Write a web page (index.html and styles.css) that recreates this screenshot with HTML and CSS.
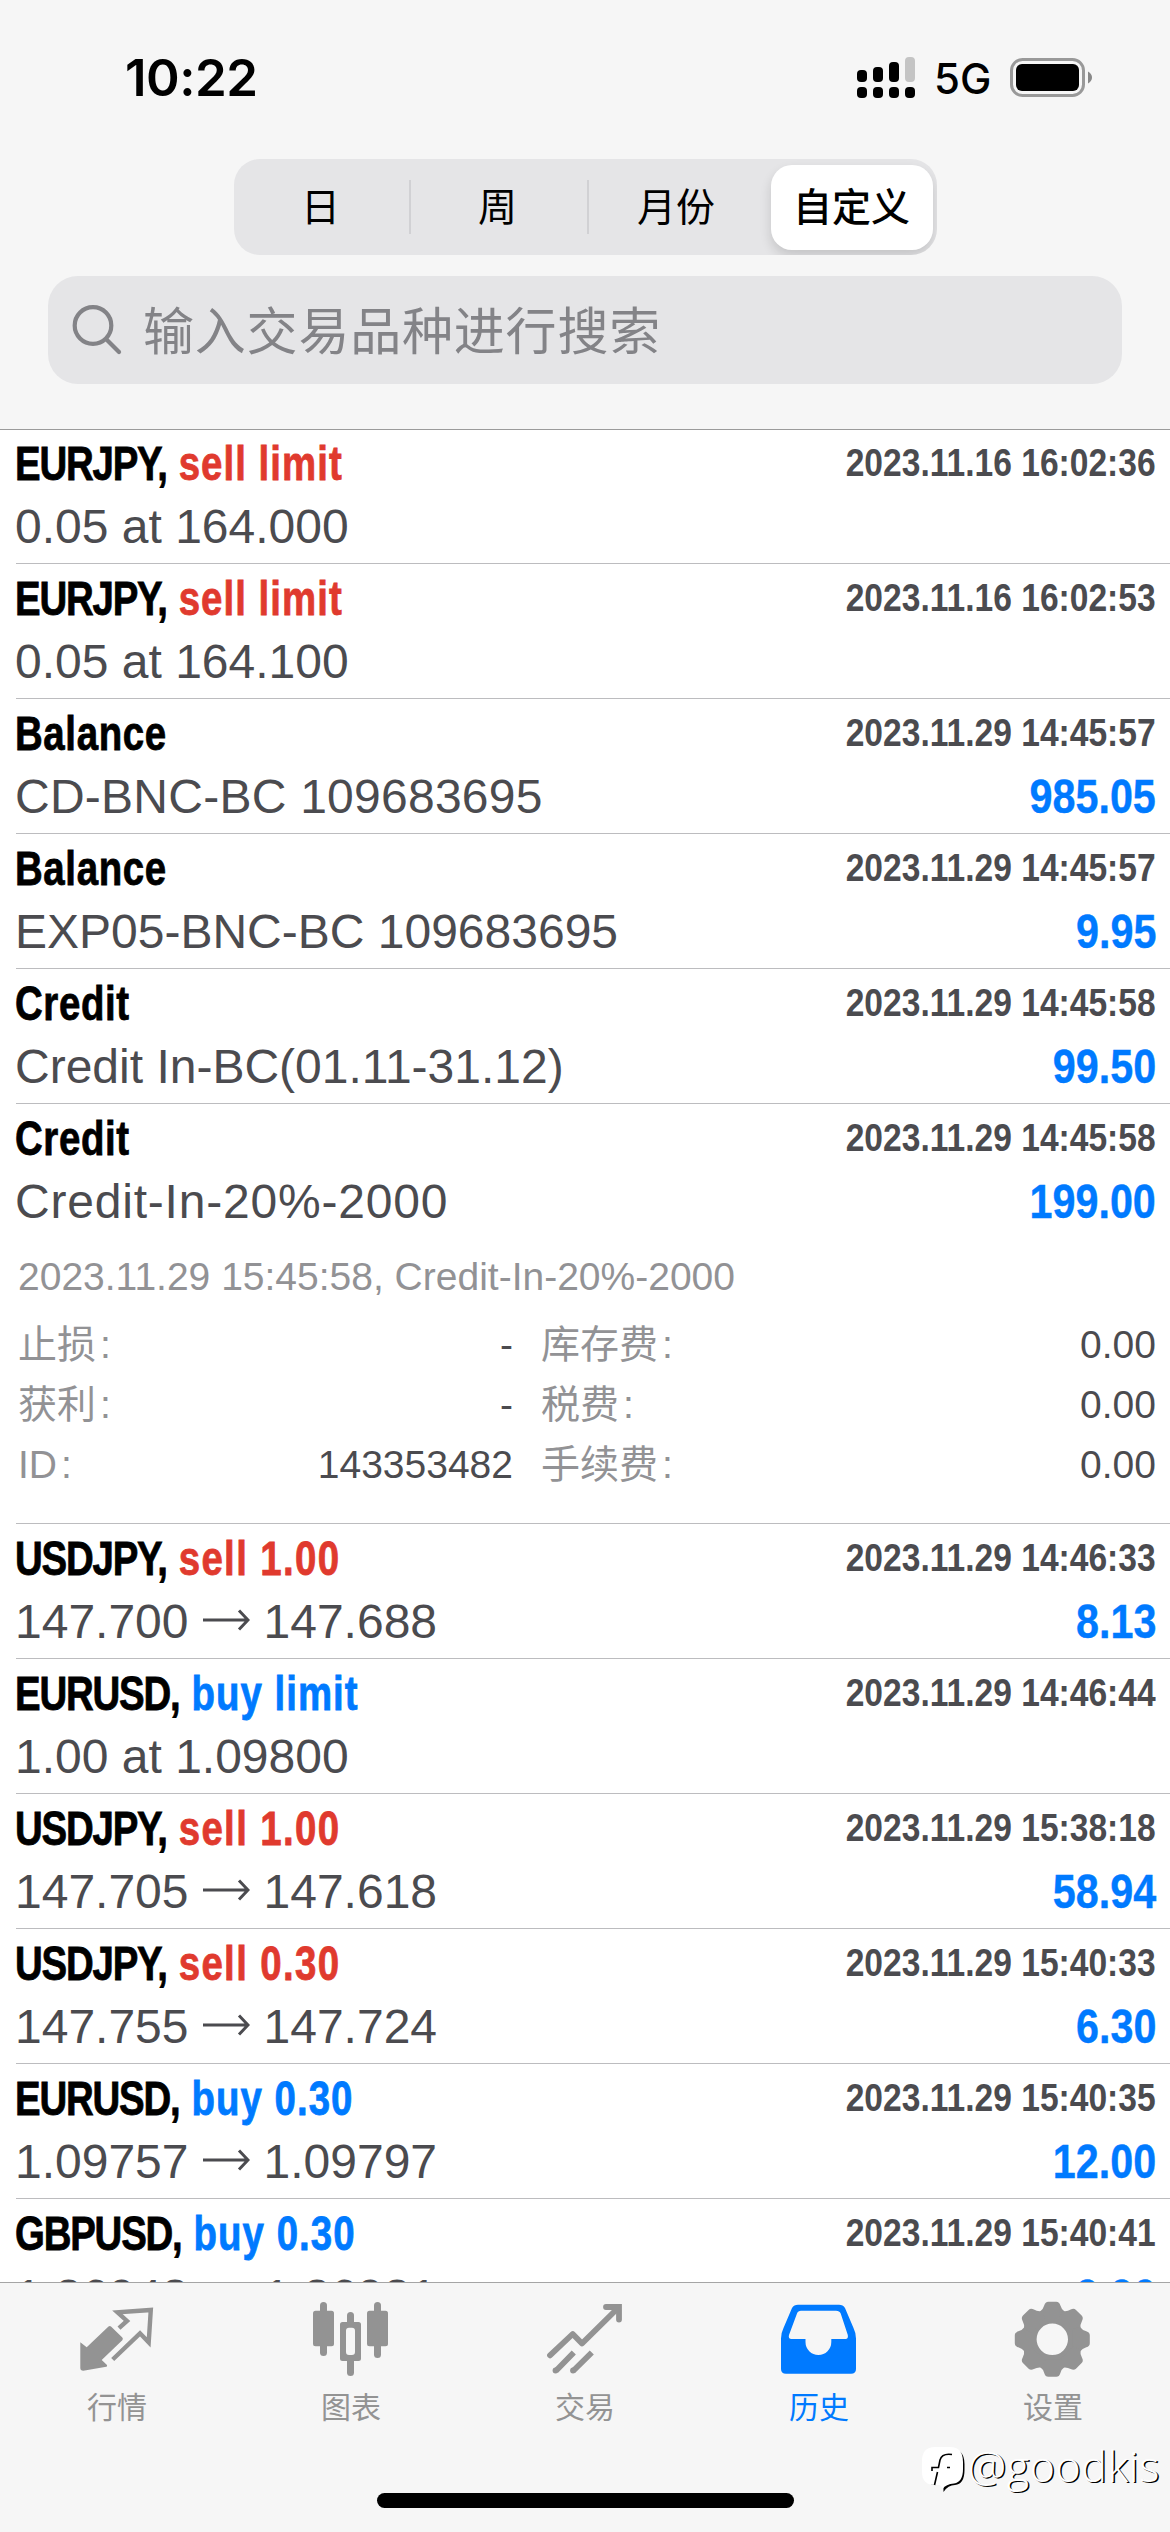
FILE: index.html
```html
<!DOCTYPE html>
<html lang="zh-CN">
<head>
<meta charset="utf-8">
<title>历史</title>
<link rel="stylesheet" href="styles.css">
</head>
<body>
<div class="app">
  <header class="header">
    <div class="status">
      <span class="time">10:22</span>
      <div class="status-right">
        <svg class="signal" viewBox="0 0 58 42" width="58" height="42">
          <rect x="0" y="13" width="10" height="12" rx="4"/><rect x="16" y="10" width="10" height="15" rx="4"/><rect x="32" y="5" width="10" height="20" rx="4"/><rect x="48" y="0" width="10" height="25" rx="4" fill="#c4c4c4"/>
          <rect x="0" y="30" width="10" height="11" rx="4"/><rect x="16" y="30" width="10" height="11" rx="4"/><rect x="32" y="30" width="10" height="11" rx="4"/><rect x="48" y="30" width="10" height="11" rx="4"/>
        </svg>
        <span class="network">5G</span>
        <svg class="battery" viewBox="0 0 83 40" width="83" height="40">
          <rect x="1.5" y="1.5" width="72" height="36" rx="11" fill="none" stroke="#999" stroke-width="3"/>
          <rect x="6" y="6" width="63" height="27" rx="6"/>
          <path d="M78 13.5Q82 16 82 19.5T78 25.500Z" fill="#888"/>
        </svg>
      </div>
    </div>
    <nav class="segments">
      <span class="seg"><span>日</span></span><span class="seg"><span>周</span></span><span class="seg"><span>月份</span></span><span class="seg selected">自定义</span>
    </nav>
    <div class="search">
      <svg viewBox="0 0 50 50" width="50" height="50" fill="none" stroke="#838387" stroke-width="4.200" stroke-linecap="round"><circle cx="21" cy="20.500" r="18.300"/><path d="M34.500 34.500L47 47"/></svg>
      <span>输入交易品种进行搜索</span>
    </div>
  </header>

  <main class="list">
    <section class="row"><div class="line top"><div class="title"><span class="sym">EURJPY,</span><span class="sell lim">sell limit</span></div><span class="date">2023.11.16 16:02:36</span></div><div class="line sub"><span>0.05 at 164.000</span></div></section>
    <section class="row"><div class="line top"><div class="title"><span class="sym">EURJPY,</span><span class="sell lim">sell limit</span></div><span class="date">2023.11.16 16:02:53</span></div><div class="line sub"><span>0.05 at 164.100</span></div></section>
    <section class="row"><div class="line top"><div class="title"><span class="word">Balance</span></div><span class="date">2023.11.29 14:45:57</span></div><div class="line sub"><span class="loose">CD-BNC-BC 109683695</span><b class="profit">985.05</b></div></section>
    <section class="row"><div class="line top"><div class="title"><span class="word">Balance</span></div><span class="date">2023.11.29 14:45:57</span></div><div class="line sub"><span>EXP05-BNC-BC 109683695</span><b class="profit">9.95</b></div></section>
    <section class="row"><div class="line top"><div class="title"><span class="word">Credit</span></div><span class="date">2023.11.29 14:45:58</span></div><div class="line sub"><span>Credit In-BC(01.11-31.12)</span><b class="profit">99.50</b></div></section>
    <section class="row open"><div class="line top"><div class="title"><span class="word">Credit</span></div><span class="date">2023.11.29 14:45:58</span></div><div class="line sub"><span class="looser">Credit-In-20%-2000</span><b class="profit">199.00</b></div>
      <div class="details">
        <p class="comment">2023.11.29 15:45:58, Credit-In-20%-2000</p>
        <dl class="facts">
          <dt>止损<i>:</i></dt><dd>-</dd><dt>库存费<i>:</i></dt><dd>0.00</dd>
          <dt>获利<i>:</i></dt><dd>-</dd><dt>税费<i>:</i></dt><dd>0.00</dd>
          <dt>ID<i>:</i></dt><dd>143353482</dd><dt>手续费<i>:</i></dt><dd>0.00</dd>
        </dl>
      </div>
    </section>
    <section class="row"><div class="line top"><div class="title"><span class="sym">USDJPY,</span><span class="sell">sell 1.00</span></div><span class="date">2023.11.29 14:46:33</span></div><div class="line sub"><span>147.700<svg class="arrow" viewBox="0 0 48 24"><path d="M1 12H46M37 2.500L46 12L37 21.500"/></svg>147.688</span><b class="profit">8.13</b></div></section>
    <section class="row"><div class="line top"><div class="title"><span class="sym">EURUSD,</span><span class="buy lim">buy limit</span></div><span class="date">2023.11.29 14:46:44</span></div><div class="line sub"><span>1.00 at 1.09800</span></div></section>
    <section class="row"><div class="line top"><div class="title"><span class="sym">USDJPY,</span><span class="sell">sell 1.00</span></div><span class="date">2023.11.29 15:38:18</span></div><div class="line sub"><span>147.705<svg class="arrow" viewBox="0 0 48 24"><path d="M1 12H46M37 2.500L46 12L37 21.500"/></svg>147.618</span><b class="profit">58.94</b></div></section>
    <section class="row"><div class="line top"><div class="title"><span class="sym">USDJPY,</span><span class="sell">sell 0.30</span></div><span class="date">2023.11.29 15:40:33</span></div><div class="line sub"><span>147.755<svg class="arrow" viewBox="0 0 48 24"><path d="M1 12H46M37 2.500L46 12L37 21.500"/></svg>147.724</span><b class="profit">6.30</b></div></section>
    <section class="row"><div class="line top"><div class="title"><span class="sym">EURUSD,</span><span class="buy">buy 0.30</span></div><span class="date">2023.11.29 15:40:35</span></div><div class="line sub"><span>1.09757<svg class="arrow" viewBox="0 0 48 24"><path d="M1 12H46M37 2.500L46 12L37 21.500"/></svg>1.09797</span><b class="profit">12.00</b></div></section>
    <section class="row"><div class="line top"><div class="title"><span class="sym">GBPUSD,</span><span class="buy">buy 0.30</span></div><span class="date">2023.11.29 15:40:41</span></div><div class="line sub"><span>1.26948<svg class="arrow" viewBox="0 0 48 24"><path d="M1 12H46M37 2.500L46 12L37 21.500"/></svg>1.26981</span><b class="profit">9.90</b></div></section>
  </main>

  <footer class="tabbar">
    <nav class="tabs">
      <div class="tab">
        <svg viewBox="0 0 90 90" width="90" height="90"><path fill="currentColor" d="M8.300 47.300L14.700 52.300L36.500 31.600Q37.800 30.600 39 31.600L50.300 42.500Q51.500 43.800 50.300 45.200L29.700 65L35 70Q35.500 71.400 34.300 71.800L11.300 75.700Q8.300 75.700 8.300 73Z"/><path fill="none" stroke="currentColor" stroke-width="4.400" d="M40.700 64.500L68 38.300L76.700 47.300L78.800 15L45.500 17.400L55 25.900L47 33.200"/></svg>
        <span>行情</span>
      </div>
      <div class="tab">
        <svg viewBox="0 0 90 90" width="90" height="90" fill="currentColor"><rect x="7" y="15.700" width="21" height="35.500" rx="2.500"/><rect x="14" y="7" width="7" height="54" rx="3.500"/><rect x="61" y="15.700" width="21" height="35.500" rx="2.500"/><rect x="68" y="7" width="7" height="56" rx="3.500"/><rect x="41" y="17" width="7" height="14" rx="3.500"/><rect x="41" y="62" width="7" height="19" rx="3.500"/><path fill-rule="evenodd" d="M36.500 27H52.500Q55 27 55 29.500V63.500Q55 66 52.500 66H36.500Q34 66 34 63.500V29.500Q34 27 36.500 27ZM43 32.700Q40 32.700 40 35.700V57Q40 60 43 60H46Q49 60 49 57V35.700Q49 32.700 46 32.700Z"/></svg>
        <span>图表</span>
      </div>
      <div class="tab">
        <svg viewBox="0 0 90 90" width="90" height="90" fill="none" stroke="currentColor" stroke-width="5.800"><path stroke-linecap="round" stroke-linejoin="round" d="M10 60.300L32.700 39L42 48.500L78 13"/><path stroke-linecap="round" stroke-linejoin="miter" d="M66 12H79V24.500"/><path d="M16 75.700L33.800 57.500M33.300 75.700L51.800 57.500"/><g fill="currentColor" stroke="none"><circle cx="15.500" cy="75.500" r="2.900"/><circle cx="33" cy="75.500" r="2.900"/></g></svg>
        <span>交易</span>
      </div>
      <div class="tab active">
        <svg viewBox="0 0 90 90" width="90" height="90" fill="currentColor"><path fill-rule="evenodd" d="M24 9.700H65Q69 9.700 71 13L79.500 33Q82 38 82 43.500V74Q82 78.700 77 78.700H12Q7 78.700 7 74V43.500Q7 38 9.500 33L18 13Q20 9.700 24 9.700ZM27 15.700H62Q65.500 15.700 66.700 18.500L73.800 40Q74.500 44 71.500 44H57.300V47A12.900 13 0 0 1 31.500 47V44H17.500Q14 44 15 40L23 18.500Q24 15.700 27 15.700Z"/></svg>
        <span>历史</span>
      </div>
      <div class="tab">
        <svg viewBox="0 0 90 90" width="90" height="90"><defs><path id="tooth" d="M-12.500 -27.500Q-9 -30 -8 -34Q-7 -37.500 -4 -37.500H4Q7 -37.500 8 -34Q9 -30 12.500 -27.500L10 -20H-10Z"/></defs><g transform="translate(44.300 44.300)" fill="currentColor"><circle r="22.800" fill="none" stroke="currentColor" stroke-width="14.200"/><use href="#tooth"/><use href="#tooth" transform="rotate(45)"/><use href="#tooth" transform="rotate(90)"/><use href="#tooth" transform="rotate(135)"/><use href="#tooth" transform="rotate(180)"/><use href="#tooth" transform="rotate(225)"/><use href="#tooth" transform="rotate(270)"/><use href="#tooth" transform="rotate(315)"/></g></svg>
        <span>设置</span>
      </div>
    </nav>
    <div class="home"></div>
    <div class="watermark">
      <svg viewBox="0 0 44 48" width="44" height="48"><path fill="#000" d="M14 3H29Q42.500 3 42.500 18V24Q42.500 38 33 39Q26 39 21.500 46Q21 42 22 39H14Q3 39 3 26V16Q3 3 14 3Z"/><path fill="#fff" d="M13 1H28Q41 1 41 16V23Q41 36 32 37.500Q24 38 20.500 43Q19 39 17 39H13Q0 39 0 26V15Q0 1 13 1Z"/><path fill="none" stroke="#000" stroke-width="1.600" d="M30 8.500Q20 7 18 14L16.500 21.500H10V25M25 21.500H28M15.500 26L12.500 39"/></svg>
      <span>@goodkis</span>
    </div>
  </footer>
</div>
</body>
</html>
```
FILE: styles.css
```css
* { box-sizing: border-box; }
body {
  margin: 0;
  background: #fff;
  font-family: "Liberation Sans", "Noto Sans CJK SC", sans-serif;
}
.app {
  width: 1170px;
  height: 2532px;
  display: flex;
  flex-direction: column;
  overflow: hidden;
}

/* header */
.header {
  flex: none;
  height: 429px;
  background: #f6f6f6;
  box-shadow: 0 1px 0 #9b9b9b;
  z-index: 1;
}
.status {
  height: 159px;
  padding: 0 77px 0 125px;
  display: flex;
  justify-content: space-between;
  align-items: flex-start;
  font-family: Inter, sans-serif;
  color: #000;
}
.time { margin-top: 48px; font-size: 51px; line-height: 60px; font-weight: 600; letter-spacing: -0.5px; }
.status-right { display: flex; align-items: flex-start; }
.signal { margin-top: 57px; }
.network { margin: 54px 0 0 19px; width: 76px; font-size: 42px; line-height: 50px; font-weight: 500; }
.battery { margin-top: 58px; }

.segments {
  width: 703px;
  height: 96px;
  margin: 0 auto;
  padding: 5px 4px;
  display: grid;
  grid-template-columns: 171px 178px 184px 162px;
  align-items: center;
  background: #e5e5e7;
  border-radius: 26px;
  font: 39px/54px "Noto Sans CJK SC", sans-serif;
  text-align: center;
  overflow: hidden;
}
.seg:nth-child(-n+2) { box-shadow: 2px 0 0 #d1d1d4; }
.seg > span { display: block; margin: -3px 5px 3px 0; }
.seg:nth-child(2) > span { margin-right: 0; }
.seg.selected {
  height: 85px;
  line-height: 79px;
  background: #fff;
  border-radius: 21px;
  font-weight: 500;
  box-shadow: 0 6px 12px rgba(0, 0, 0, .14);
}

.search {
  margin: 21px 48px 0;
  height: 108px;
  padding: 0 24px;
  display: flex;
  align-items: center;
  gap: 21px;
  background: #e5e5e7;
  border-radius: 30px;
  color: #838387;
  font: 51px/76px "Noto Sans CJK SC", sans-serif;
  letter-spacing: .8px;
}
.search span { margin: -2px 0 2px; }

/* history list */
.list { flex: 1; min-height: 0; overflow: hidden; }
.row {
  height: 135px;
  margin-left: 16px;
  padding: 5px 14px 0 0;
  border-bottom: 1px solid #bcbcbf;
}
.row.open { height: 420px; }
.line { display: flex; justify-content: space-between; margin-left: -1px; white-space: nowrap; }
.top { height: 60px; line-height: 60px; }
.title {
  display: flex;
  transform: scaleX(.8);
  transform-origin: left;
  font-size: 48px;
  font-weight: 700;
  color: #000;
  -webkit-text-stroke: .8px currentColor;
}
.sym { letter-spacing: -1.5px; margin-right: 15px; }
.word { letter-spacing: .8px; }
.sell { color: #e03a2e; letter-spacing: 1.7px; }
.buy { color: #007aff; letter-spacing: 1.3px; }
.lim { letter-spacing: 1.3px; }
.date { transform: scaleX(.85); transform-origin: right; font-size: 39.500px; line-height: 57px; font-weight: 700; color: #4b4b4f; }
.sub { height: 66px; line-height: 66px; font-size: 48px; color: #4b4b4f; }
.loose { letter-spacing: .25px; }
.looser { letter-spacing: .8px; }
.arrow { width: 48px; height: 24px; margin: 0 14px 0 13px; vertical-align: 6px; fill: none; stroke: #4b4b4f; stroke-width: 3; }
.profit { transform: scaleX(.86); transform-origin: right; color: #007aff; -webkit-text-stroke: .4px currentColor; }

.details { padding: 12px 0 0 2px; font-size: 39px; color: #929295; }
.comment { margin: 0; line-height: 60px; }
.facts {
  margin: 8px 0 0;
  display: grid;
  grid-template-columns: 160px 335px 220px 1fr;
  grid-auto-rows: 60px;
  line-height: 60px;
}
.facts dt i { font-style: normal; margin-left: 4px; }
.facts dd { margin: 0; text-align: right; color: #4b4b4f; }
.facts dt:nth-of-type(even) { padding-left: 28px; }

/* tab bar */
.tabbar {
  flex: none;
  position: relative;
  height: 250px;
  padding-top: 12px;
  background: #f6f6f6;
  border-top: 1px solid #a5a5a5;
}
.tabs { display: grid; grid-template-columns: repeat(5, 1fr); }
.tab { display: flex; flex-direction: column; align-items: center; color: #939393; font: 30px/44px "Noto Sans CJK SC", sans-serif; }
.tab span { margin: -2px 0 2px; }
.active { color: #007aff; }
.home { width: 417px; height: 15px; margin: 64px auto 0; background: #000; border-radius: 8px; }
.watermark {
  position: absolute;
  left: 922px;
  top: 163px;
  display: flex;
  gap: 2px;
  color: #fff;
  font: 300 43px/40px "Open Sans", "Noto Sans", sans-serif;
  letter-spacing: .6px;
  text-shadow: 1.5px 1px 0 #000;
}
```
